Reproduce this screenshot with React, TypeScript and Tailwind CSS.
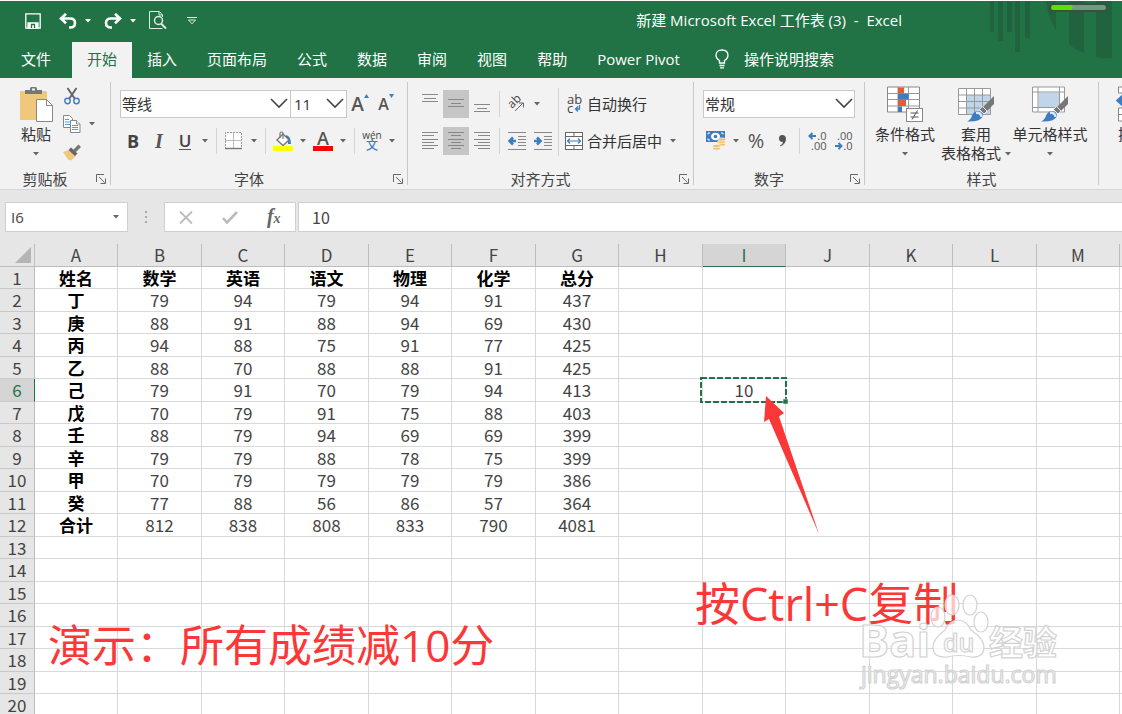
import React from "react";

const columns = ["A", "B", "C", "D", "E", "F", "G", "H", "I", "J", "K", "L", "M"];

const sheetRows: string[][] = [
  ["姓名", "数学", "英语", "语文", "物理", "化学", "总分"],
  ["丁", "79", "94", "79", "94", "91", "437"],
  ["庚", "88", "91", "88", "94", "69", "430"],
  ["丙", "94", "88", "75", "91", "77", "425"],
  ["乙", "88", "70", "88", "88", "91", "425"],
  ["己", "79", "91", "70", "79", "94", "413"],
  ["戊", "70", "79", "91", "75", "88", "403"],
  ["壬", "88", "79", "94", "69", "69", "399"],
  ["辛", "79", "79", "88", "78", "75", "399"],
  ["甲", "70", "79", "79", "79", "79", "386"],
  ["癸", "77", "88", "56", "86", "57", "364"],
  ["合计", "812", "838", "808", "833", "790", "4081"],
];

const rowNumbers = Array.from({ length: 20 }, (_, i) => i + 1);

const menuTabs = ["开始", "插入", "页面布局", "公式", "数据", "审阅", "视图", "帮助", "Power Pivot"];

type BtnProps = {
  label: string;
  active?: boolean;
  children: React.ReactNode;
};

const IconBtn: React.FC<BtnProps> = ({ label, active, children }) => (
  <button
    type="button"
    aria-label={label}
    className={`flex h-7 w-[26px] shrink-0 items-center justify-center ${active ? "bg-[#c6c6c6]" : ""}`}
  >
    {children}
  </button>
);

const Triangle: React.FC<{ className?: string }> = ({ className = "fill-[#666]" }) => (
  <svg width="6" height="4" viewBox="0 0 6 4" className={`shrink-0 ${className}`}>
    <path d="M0 0h6L3 3.6z" />
  </svg>
);

const Caret: React.FC<{ label: string }> = ({ label }) => (
  <button type="button" aria-label={label} className="flex h-7 w-[14px] shrink-0 items-center justify-center">
    <Triangle />
  </button>
);

const Sep: React.FC = () => <div className="mx-1 h-[26px] w-px shrink-0 bg-[#d4d4d4]" />;

const Chevron: React.FC = () => (
  <svg width="18" height="11" viewBox="0 0 18 11" className="pointer-events-none absolute top-2 right-[3px]">
    <path d="M1 1l8 8 8-8" fill="none" stroke="#444" strokeWidth="1.6" />
  </svg>
);

type GroupProps = {
  title: string;
  className: string;
  launcher?: boolean;
  children: React.ReactNode;
};

const Group: React.FC<GroupProps> = ({ title, className, launcher = true, children }) => (
  <>
    <section className={`flex shrink-0 flex-col ${className}`}>
      <div className="flex flex-1">{children}</div>
      <div className="flex h-5 items-center">
        <h2 className="flex-1 text-center text-[15px] leading-5 text-[#444]">{title}</h2>
        {launcher && (
          <button type="button" aria-label={`${title}设置`} className="flex w-5 items-center pl-1.5">
            <svg width="10" height="10" viewBox="0 0 10 10" fill="none" stroke="#666">
              <path d="M.5 8V.5H8M3 3l5.500 5.500M9.500 4.500v5h-5" />
            </svg>
          </button>
        )}
      </div>
    </section>
    <div className="mb-1 w-px shrink-0 bg-[#c8c8c8]" />
  </>
);

type BigBtnProps = {
  className: string;
  lines: string[];
  caretBelow?: boolean;
  children: React.ReactNode;
};

const BigBtn: React.FC<BigBtnProps> = ({ className, lines, caretBelow = true, children }) => (
  <button type="button" className={`flex shrink-0 flex-col items-center pt-1 text-[15px] leading-[19px] text-[#333] ${className}`}>
    <span className="mb-[2px] flex h-[37px]">{children}</span>
    {lines.map((line, i) => (
      <span key={line} className="flex items-center gap-1 whitespace-nowrap">
        {line}
        {!caretBelow && i === lines.length - 1 && <Triangle />}
      </span>
    ))}
    {caretBelow && (
      <span className="flex h-[19px] items-center">
        <Triangle />
      </span>
    )}
  </button>
);

// Horizontal rules given as [x1, x2, y]
const Lines: React.FC<{ rows: number[][] }> = ({ rows }) => (
  <svg width="18" height="20" viewBox="0 0 18 20" stroke="#888">
    {rows.map(([a, b, y]) => (
      <line key={y} x1={a} x2={b} y1={y + 0.5} y2={y + 0.5} />
    ))}
  </svg>
);

const PasteIcon = () => (
  <svg width="36" height="38" viewBox="0 0 36 38">
    <rect x="2" y="5" width="27" height="29" rx="1" fill="#efc87e" />
    <path d="M7 8V4h5V2.500Q12 1 13.500 1h4Q19 1 19 2.500V4h5v4z" fill="#777" />
    <rect x="14" y="2.500" width="3" height="2" fill="#f2f2f2" />
    <path d="M18.500 13.500h10l6 6v16h-16z" fill="#fff" stroke="#888" />
    <path d="M28.500 13.500v6h6" fill="none" stroke="#888" />
  </svg>
);

const ScissorsIcon = () => (
  <svg width="16" height="18" viewBox="0 0 16 18" fill="none">
    <path d="M3.500 1l7.500 11M12.500 1L5 12" stroke="#666" strokeWidth="2" />
    <circle cx="3.500" cy="14" r="2.700" stroke="#3d7cc0" strokeWidth="1.400" />
    <circle cx="12.500" cy="14" r="2.700" stroke="#3d7cc0" strokeWidth="1.400" />
  </svg>
);

const CopyIcon = () => (
  <svg width="18" height="18" viewBox="0 0 18 18" fill="#fff" stroke="#888">
    <path d="M.5.5h6l3 3v9h-9z" />
    <path d="M2 4.500h4M2 7h5M2 9.500h5" stroke="#5b9bd5" />
    <path d="M7.500 5.500h6l3.500 3.500v8.500h-9.500z" />
    <path d="M13.500 5.500v3.500H17" />
    <path d="M9 10.500h6M9 12.500h6M9 14.500h6" stroke="#5b9bd5" />
  </svg>
);

const BrushIcon = () => (
  <svg width="18" height="17" viewBox="0 0 18 17">
    <path d="M0 8l6-2 7 6-5 4.500-3-1z" fill="#efc87e" />
    <path d="M5.500 6l2.500-2.500 6.500 6-2.500 2.500z" fill="#666" />
    <path d="M10 6l5.500-5.500L18 3l-5.500 5.500z" fill="#777" />
  </svg>
);

const BucketIcon = () => (
  <svg width="20" height="20" viewBox="0 0 20 20">
    <path d="M13 4q5 1 5 9h-3q0-5-2-7z" fill="#3d7cc0" />
    <path d="M4 9l6-6 6 6-6 5.500z" fill="#fff" stroke="#777" strokeWidth="1.400" />
    <path d="M7 7V2.500Q7 1 8.500 1T10 2.500V8" fill="none" stroke="#777" strokeWidth="1.200" />
    <rect y="15" width="20" height="5" fill="#ff0" />
  </svg>
);

const BordersIcon = () => (
  <svg width="18" height="18" viewBox="0 0 18 18" fill="none" stroke="#999">
    <rect x=".5" y=".5" width="16" height="16" fill="#fff" stroke="none" />
    <path d="M.5 17V.5h16V17" strokeDasharray="2 1" />
    <path d="M8.500 1v16M0 8.500h17" stroke="#bbb" />
    <path d="M0 16.500h17" stroke="#777" strokeWidth="1.400" />
  </svg>
);

const IndentIcon: React.FC<{ right?: boolean }> = ({ right }) => (
  <svg width="18" height="18" viewBox="0 0 18 18" stroke="#888">
    <path d="M0 .5h18M10 4.500h8M10 7.500h8M10 10.500h8M10 13.500h8M0 17.500h18" />
    <path
      d={right ? "M0 9h6M3 5.500L6.500 9 3 12.500" : "M8 9H2M5 5.500L1.500 9 5 12.500"}
      fill="none"
      stroke="#3d7cc0"
      strokeWidth="2.600"
    />
  </svg>
);

const MergeIcon = () => (
  <svg width="18" height="18" viewBox="0 0 18 18" fill="#fff" stroke="#666">
    <rect x=".5" y=".5" width="17" height="17" />
    <path d="M.5 4.500h17M.5 13.500h17M9 .5v4M9 13.500v4" />
    <path d="M2.500 9h13M5 6.500L2.500 9 5 11.500M13 6.500L15.500 9 13 11.500" fill="none" stroke="#3d7cc0" strokeWidth="1.200" />
  </svg>
);

const MoneyIcon = () => (
  <svg width="20" height="20" viewBox="0 0 20 20">
    <rect width="19" height="11" fill="#3d7cc0" />
    <path d="M2 3.500V2h2M2 7.500V9h2M17 3.500V2h-2" stroke="#fff" fill="none" />
    <ellipse cx="9.500" cy="5.500" rx="4.500" ry="3.800" fill="#fff" />
    <circle cx="9.500" cy="5.500" r="1.800" fill="#3d7cc0" />
    <g fill="#efc07a" stroke="#fff" strokeWidth=".6">
      <ellipse cx="15.500" cy="13.500" rx="4" ry="1.700" />
      <ellipse cx="15.500" cy="11" rx="4" ry="1.700" />
      <ellipse cx="15.500" cy="8.500" rx="4" ry="1.700" />
      <ellipse cx="10.500" cy="17.500" rx="4" ry="1.700" />
      <ellipse cx="10.500" cy="15" rx="4" ry="1.700" />
    </g>
  </svg>
);

const DecimalIcon: React.FC<{ top: string; bottom: string; less?: boolean }> = ({ top, bottom, less }) => (
  <span className="relative flex w-[19px] flex-col items-end text-[11px] leading-[10px] text-[#555]">
    <svg width="10" height="20" viewBox="0 0 10 20" className="absolute top-0 left-0">
      <path
        d={less ? "M1 15h6M4.500 12l3 3-3 3" : "M8 5H2M4.500 2l-3 3 3 3"}
        fill="none"
        stroke="#3d7cc0"
        strokeWidth="2"
      />
    </svg>
    <span>{top}</span>
    <span>{bottom}</span>
  </span>
);

const ConditionalIcon = () => (
  <svg width="37" height="37" viewBox="0 0 37 37">
    <path d="M.5 1h32v25H.5z" fill="#fff" stroke="#888" />
    <path d="M.5 7.500h32M.5 13.500h32M.5 20h32M11 1v25M21.500 1v25" stroke="#999" />
    <path d="M11 1.500h6v6h-6zM11 14h8v6h-8z" fill="#dc5f3c" />
    <path d="M11 8h10.500v5.500H11zM11 20.500h4V26h-4z" fill="#3d7cc0" />
    <rect x="19.500" y="22.500" width="16" height="13" fill="#fff" stroke="#888" />
    <path d="M23.500 27h8M23.500 31h8M30.500 24.500l-5.500 9" stroke="#555" />
  </svg>
);

const PaintBrush = () => (
  <g>
    <path d="M36 10v8l-7 7-4-4z" fill="#777" />
    <path d="M24.500 20.500l4.500 4.500-3 3-4.500-4.500z" fill="#777" stroke="#fff" strokeWidth=".8" />
    <path d="M19 25q6 0 6 5-2 6-16 5.500 4-2 5-6 2-4 5-4.500z" fill="#3d7cc0" />
    <path d="M18 27q5-1 5.500 4" fill="none" stroke="#dce9f7" strokeWidth="2.500" />
  </g>
);

const TableStyleIcon = () => (
  <svg width="37" height="37" viewBox="0 0 37 37">
    <path d="M.5 2.500h32v26H.5z" fill="#fff" />
    <path d="M9 9h23.500v19.500H9z" fill="#c0d4ea" />
    <path d="M.5 2.500h32v26H.5zM.5 9h32M.5 15.500h32M.5 22h32M8.500 2.500v26M16.500 2.500v26M24.500 2.500v26" fill="none" stroke="#999" />
    <PaintBrush />
  </svg>
);

const CellStyleIcon = () => (
  <svg width="37" height="37" viewBox="0 0 37 37">
    <path d="M.5 1h32v25H.5z" fill="#fff" />
    <path d="M6.500 6.500h21v15h-21z" fill="#c0d4ea" />
    <path d="M.5 1h32v25H.5zM.5 6h32M.5 21.500h32M6 1v25M27.500 1v25" fill="none" stroke="#999" />
    <PaintBrush />
  </svg>
);

const TitleBar: React.FC = () => (
  <header className="relative border-t border-white bg-[#217346] text-white">
    <svg width="134" height="60" viewBox="0 0 134 60" className="absolute top-0 right-0">
      <g fill="#22633f">
        <path d="M2 0h4v31H2zM10 0h5v40h-5zM19 0h5v31h-5zM27 0h5v51h-5zM37 0h5v37h-5z" />
        <path d="M58 0h10v29Q60 16 58 0zM81 0h15v52q-9-3-15-9zM108 0h16v57q-9 1-16-1z" />
      </g>
      <rect x="62" y="3" width="57" height="7" rx="3.500" fill="#6f9c82" stroke="#35533f" strokeWidth="2" />
      <rect x="63.500" y="4" width="21" height="5" rx="2.500" fill="#5fe000" />
    </svg>

    <div className="relative flex h-[41px] items-center pb-0.5 pl-[25px]">
      <button type="button" aria-label="保存">
        <svg width="16" height="16" viewBox="0 0 16 16" fill="none" stroke="#fff" strokeWidth="1.300">
          <path d="M.8.8h14.400v14.400H.8z" />
          <path d="M3 10h10v5H3z" fill="#fff" />
          <path d="M6.500 15v-3.500h3V15" stroke="#217346" />
        </svg>
      </button>
      <button type="button" aria-label="撤消" className="ml-[18px]">
        <svg width="18" height="16" viewBox="0 0 18 16" fill="none" stroke="#fff" strokeWidth="2.600">
          <path d="M7 .8L2 5.500l5 4.700M2 5.500h9q5 0 5 4.500T11 14.500h-1" />
        </svg>
      </button>
      <button type="button" aria-label="撤消列表" className="ml-2">
        <Triangle className="fill-white" />
      </button>
      <button type="button" aria-label="恢复" className="ml-[13px]">
        <svg width="18" height="16" viewBox="0 0 18 16" fill="none" stroke="#fff" strokeWidth="2.600">
          <path d="M11 .8l5 4.700-5 4.700M16 5.500H7Q2 5.500 2 10t5 4.500h1" />
        </svg>
      </button>
      <button type="button" aria-label="恢复列表" className="ml-2">
        <Triangle className="fill-white" />
      </button>
      <button type="button" aria-label="打印预览" className="ml-[13px]">
        <svg width="18" height="19" viewBox="0 0 18 19" fill="none" stroke="#dfece4">
          <path d="M13.500 6V4l-3-3.500H.5v17h13" />
          <path d="M10 .5V4h3.500" />
          <circle cx="9.500" cy="9.500" r="4" strokeWidth="1.500" />
          <path d="M12 12.500l5 5" strokeWidth="2" />
        </svg>
      </button>
      <button type="button" aria-label="自定义快速访问工具栏" className="ml-5">
        <svg width="10" height="8" viewBox="0 0 10 8" fill="none" stroke="#dfece4">
          <path d="M0 .5h10M1.500 3h7L5 6.800z" />
        </svg>
      </button>
      <h1 className="mr-[220px] ml-auto text-[15px] whitespace-pre">新建 Microsoft Excel 工作表 (3)  -  Excel</h1>
    </div>

    <nav className="relative flex h-9 text-[15px] whitespace-nowrap">
      <button type="button" className="mr-1.5 ml-1.5 px-[15px] pb-0.5">
        文件
      </button>
      {menuTabs.map((tab, i) => (
        <button type="button" key={tab} className={`px-[15px] pb-0.5 ${i === 0 ? "bg-[#f2f2f2] text-[#217346]" : ""}`}>
          {tab}
        </button>
      ))}
      <button type="button" className="ml-5 flex items-center gap-[15px] pb-0.5">
        <svg width="14" height="20" viewBox="0 0 14 20" fill="none" stroke="#fff" strokeWidth="1.300">
          <path d="M4.500 14v-2.500Q1 9.500 1 6.500 1 1 7 1t6 5.500q0 3-3.500 5V14z" />
          <path d="M4.500 16.500h5M5 18.800h4" />
        </svg>
        操作说明搜索
      </button>
    </nav>
  </header>
);

const Ribbon: React.FC = () => (
  <div className="flex h-28 overflow-hidden border-b border-[#d5d5d5] bg-[#f2f2f2] pt-1 text-[#333]">
    <Group title="剪贴板" className="w-[110px]">
      <BigBtn className="ml-[15px] w-[42px]" lines={["粘贴"]}>
        <PasteIcon />
      </BigBtn>
      <div className="ml-[2px] flex flex-col">
        <IconBtn label="剪切">
          <ScissorsIcon />
        </IconBtn>
        <div className="flex">
          <IconBtn label="复制">
            <CopyIcon />
          </IconBtn>
          <Caret label="复制选项" />
        </div>
        <IconBtn label="格式刷">
          <BrushIcon />
        </IconBtn>
      </div>
    </Group>

    <Group title="字体" className="w-[296px]">
      <div className="flex flex-col gap-[9px] pt-2 pl-[9px]">
        <div className="flex">
          <div className="relative">
            <select aria-label="字体名称" className="h-7 w-[171px] appearance-none border border-[#c8c8c8] bg-white px-px text-[15px]">
              <option>等线</option>
            </select>
            <Chevron />
          </div>
          <div className="relative -ml-px">
            <select aria-label="字号" className="h-7 w-[57px] appearance-none border border-[#c8c8c8] bg-white px-[3px] text-[15px]">
              <option>11</option>
            </select>
            <Chevron />
          </div>
          <IconBtn label="增大字号">
            <span className="text-[19px] font-semibold text-[#555]">A</span>
            <svg width="5" height="4" viewBox="0 0 5 4" className="mb-4 fill-[#3d7cc0]">
              <path d="M0 4h5L2.500 0z" />
            </svg>
          </IconBtn>
          <IconBtn label="减小字号">
            <span className="text-base font-semibold text-[#555]">A</span>
            <svg width="5" height="4" viewBox="0 0 5 4" className="mb-4 fill-[#3d7cc0]">
              <path d="M0 0h5L2.500 4z" />
            </svg>
          </IconBtn>
        </div>
        <div className="flex items-center">
          <IconBtn label="加粗">
            <span className="text-lg font-bold text-[#444]">B</span>
          </IconBtn>
          <IconBtn label="倾斜">
            <span className="font-['Liberation_Serif',serif] text-xl font-bold text-[#555] italic">I</span>
          </IconBtn>
          <IconBtn label="下划线">
            <span className="border-b border-[#555] text-[17px] leading-[17px] font-semibold text-[#444]">U</span>
          </IconBtn>
          <Caret label="下划线选项" />
          <Sep />
          <IconBtn label="边框">
            <BordersIcon />
          </IconBtn>
          <Caret label="边框选项" />
          <Sep />
          <IconBtn label="填充颜色">
            <BucketIcon />
          </IconBtn>
          <Caret label="填充颜色选项" />
          <IconBtn label="字体颜色">
            <span className="w-5 border-b-[5px] border-[#f00] text-lg leading-[15px] font-semibold text-[#555]">A</span>
          </IconBtn>
          <Caret label="字体颜色选项" />
          <Sep />
          <IconBtn label="拼音指南">
            <span className="flex flex-col items-center text-[10px] leading-[9px] font-medium text-[#444]">
              wén
              <span className="text-xs leading-[11px] text-[#3d7cc0]">文</span>
            </span>
          </IconBtn>
          <Caret label="拼音选项" />
        </div>
      </div>
    </Group>

    <Group title="对齐方式" className="w-[285px]">
      <div className="flex flex-col gap-[9px] pt-2 pl-[9px]">
        <div className="flex items-center">
          <IconBtn label="顶端对齐">
            <Lines rows={[[1, 17, 0], [3, 15, 4], [1, 17, 7]]} />
          </IconBtn>
          <IconBtn label="垂直居中" active>
            <Lines rows={[[1, 17, 5], [4, 14, 9], [1, 17, 12]]} />
          </IconBtn>
          <IconBtn label="底端对齐">
            <Lines rows={[[1, 17, 10], [4, 14, 14], [1, 17, 17]]} />
          </IconBtn>
          <Sep />
          <IconBtn label="方向">
            <svg width="20" height="20" viewBox="0 0 20 20" className="overflow-visible">
              <text x="0" y="0" fontSize="12" fill="#444" transform="translate(5 15) rotate(-45)">
                ab
              </text>
              <path d="M8 17l8-8M12 9h4.500v4.500" fill="none" stroke="#666" />
            </svg>
          </IconBtn>
          <Caret label="方向选项" />
        </div>
        <div className="flex items-center">
          <IconBtn label="左对齐">
            <Lines rows={[[1, 17, 1], [1, 13, 4], [1, 17, 8], [1, 13, 11], [1, 17, 14], [1, 13, 17]]} />
          </IconBtn>
          <IconBtn label="居中" active>
            <Lines rows={[[1, 17, 1], [4, 14, 4], [1, 17, 8], [4, 14, 11], [1, 17, 14], [4, 14, 17]]} />
          </IconBtn>
          <IconBtn label="右对齐">
            <Lines rows={[[1, 17, 1], [5, 17, 4], [1, 17, 8], [5, 17, 11], [1, 17, 14], [5, 17, 17]]} />
          </IconBtn>
          <Sep />
          <IconBtn label="减少缩进量">
            <IndentIcon />
          </IconBtn>
          <IconBtn label="增加缩进量">
            <IndentIcon right />
          </IconBtn>
        </div>
      </div>
      <div className="mx-[2px] mt-1.5 h-[68px] w-px bg-[#d4d4d4]" />
      <div className="flex flex-col gap-[9px] pt-2">
        <button type="button" className="flex h-7 items-center text-[15px] whitespace-nowrap">
          <span className="relative flex w-[26px] flex-col pl-1.5 text-left text-[13px] leading-[9px] text-[#444]">
            <span>ab</span>
            <span>c</span>
            <svg width="7" height="8" viewBox="0 0 7 8" className="absolute right-[6px] bottom-0">
              <path d="M5.500 0v4H1.500M4 1.500L1.500 4 4 6.500" fill="none" stroke="#3d7cc0" strokeWidth="1.300" />
            </svg>
          </span>
          自动换行
        </button>
        <div className="flex">
          <button type="button" className="flex h-7 items-center text-[15px] whitespace-nowrap">
            <span className="flex w-[26px] justify-center">
              <MergeIcon />
            </span>
            合并后居中
          </button>
          <span className="ml-1 flex">
            <Caret label="合并选项" />
          </span>
        </div>
      </div>
    </Group>

    <Group title="数字" className="w-[170px]">
      <div className="flex flex-col gap-[9px] pt-2 pl-[9px]">
        <div className="relative">
          <select aria-label="数字格式" className="h-7 w-[152px] appearance-none border border-[#c8c8c8] bg-white px-px text-[15px]">
            <option>常规</option>
          </select>
          <Chevron />
        </div>
        <div className="flex items-center">
          <IconBtn label="会计数字格式">
            <MoneyIcon />
          </IconBtn>
          <Caret label="会计数字格式选项" />
          <IconBtn label="百分比样式">
            <span className="text-xl text-[#555]">%</span>
          </IconBtn>
          <IconBtn label="千位分隔样式">
            <svg width="9" height="12" viewBox="0 0 9 12" fill="#555">
              <path d="M4 0q4 0 4 4 0 5-5.500 7.500L2 10.500Q5 9 5 7 1 7 1 3.500 1 0 4 0z" />
            </svg>
          </IconBtn>
          <Sep />
          <IconBtn label="增加小数位数">
            <DecimalIcon top=".0" bottom=".00" />
          </IconBtn>
          <IconBtn label="减少小数位数">
            <DecimalIcon top=".00" bottom=".0" less />
          </IconBtn>
        </div>
      </div>
    </Group>

    <Group title="样式" className="w-[233px]" launcher={false}>
      <BigBtn className="ml-[5px] w-[70px]" lines={["条件格式"]}>
        <ConditionalIcon />
      </BigBtn>
      <BigBtn className="w-[72px]" lines={["套用", "表格格式"]} caretBelow={false}>
        <TableStyleIcon />
      </BigBtn>
      <BigBtn className="w-[76px]" lines={["单元格样式"]}>
        <CellStyleIcon />
      </BigBtn>
    </Group>

    <Group title="单元格" className="w-[200px]" launcher={false}>
      <BigBtn className="ml-[15px] w-[38px]" lines={["插入"]}>
        <svg width="34" height="37" viewBox="0 0 34 37" fill="#fff" stroke="#888">
          <path d="M2.500 1h29v6h-29zM2.500 22h29v13h-29zM2.500 28.500h29M12 1v6M22 1v6M12 22v13M22 22v13" />
          <path d="M20 14.500H3M9 8l-7 6.500L9 21" fill="none" stroke="#3d7cc0" strokeWidth="3" />
        </svg>
      </BigBtn>
    </Group>
  </div>
);

const FormulaBar: React.FC = () => (
  <div className="flex bg-[#e6e6e6] py-3 pl-[5px] text-[15px] text-[#444]">
    <div className="flex h-[30px] w-[123px] shrink-0 items-center border border-[#cfcfcf] bg-white pr-2">
      <input aria-label="名称框" defaultValue="I6" className="min-w-0 flex-1 bg-transparent pl-[5px] outline-none" />
      <button type="button" aria-label="名称列表">
        <Triangle />
      </button>
    </div>
    <div className="flex w-9 shrink-0 flex-col items-center justify-center gap-[3px]">
      <i className="size-[2px] bg-[#aaa]" />
      <i className="size-[2px] bg-[#aaa]" />
      <i className="size-[2px] bg-[#aaa]" />
    </div>
    <div className="flex h-[30px] w-[132px] shrink-0 items-center justify-around border border-[#cfcfcf] bg-white">
      <button type="button" aria-label="取消">
        <svg width="14" height="13" viewBox="0 0 14 13" fill="none" stroke="#bbb" strokeWidth="1.800">
          <path d="M1 .5l12 12M13 .5L1 12.500" />
        </svg>
      </button>
      <button type="button" aria-label="输入">
        <svg width="16" height="13" viewBox="0 0 16 13" fill="none" stroke="#bbb" strokeWidth="2.600">
          <path d="M1 7l4 4.500L15 1" />
        </svg>
      </button>
      <button type="button" aria-label="插入函数" className="font-['Liberation_Serif',serif] text-xl leading-5 font-semibold text-[#666] italic">
        f<span className="text-sm">x</span>
      </button>
    </div>
    <input
      aria-label="编辑栏"
      defaultValue="10"
      className="ml-[2px] h-[30px] min-w-0 flex-1 border border-r-0 border-[#cfcfcf] bg-white pl-[13px] font-['Noto_Sans_CJK_SC',sans-serif] text-base outline-none"
    />
  </div>
);

const Cell: React.FC<{ row: number; col: string; value?: string }> = ({ row, col, value }) => {
  const selected = row === 6 && col === "I";
  const bold = row === 1 || col === "A";
  return (
    <td
      className={`border-r border-b border-[#d9d9d9] p-0 text-center ${bold ? "font-bold text-black" : ""} ${
        selected ? "relative" : ""
      }`}
    >
      {selected ? "10" : value}
      {selected && (
        <svg className="absolute -top-[2px] -left-[3px] size-[calc(100%+4px)] overflow-visible">
          <rect x="1" y="1" width="85" height="24" fill="none" stroke="#217346" strokeWidth="2" strokeDasharray="6 2" />
          <rect x="83" y="22" width="5" height="5" fill="#217346" stroke="#fff" strokeWidth=".5" />
        </svg>
      )}
    </td>
  );
};

const Sheet: React.FC = () => (
  <main className="relative flex-1 overflow-hidden bg-white">
    <table className="w-full table-fixed border-separate border-spacing-0 font-['Noto_Sans_CJK_SC',sans-serif] text-[17px] leading-5 text-[#444]">
      <colgroup>
        <col className="w-[35px]" />
        {columns.map((c, i) => (
          <col key={c} className={i % 2 ? "w-[84px]" : "w-[83px]"} />
        ))}
        <col />
      </colgroup>
      <thead>
        <tr className="h-[23px] bg-[#e6e6e6]">
          <td className="border-r border-b border-[#bdbdbd] p-0">
            <svg width="17" height="17" viewBox="0 0 17 17" className="ml-[14px] fill-[#b5b5b5]">
              <path d="M17 0v16H1z" />
            </svg>
          </td>
          {columns.map((c) => (
            <th
              key={c}
              scope="col"
              className={`border-r border-b p-0 font-normal ${
                c === "I" ? "border-r-[#bdbdbd] border-b-[#217346] bg-[#d5d5d5] text-[#217346]" : "border-[#bdbdbd]"
              }`}
            >
              {c}
            </th>
          ))}
          <td className="border-b border-[#bdbdbd]" />
        </tr>
      </thead>
      <tbody>
        {rowNumbers.map((n) => (
          <tr key={n} className={n % 2 ? "h-[22px]" : "h-[23px]"}>
            <th
              scope="row"
              className={`border-r border-b border-b-[#c9c9c9] p-0 font-normal ${
                n === 6 ? "border-r-[#217346] bg-[#d5d5d5] text-[#217346]" : "border-r-[#bdbdbd] bg-[#e6e6e6]"
              }`}
            >
              {n}
            </th>
            {columns.map((c, i) => (
              <Cell key={c} row={n} col={c} value={sheetRows[n - 1]?.[i]} />
            ))}
            <td className="border-b border-[#d9d9d9] p-0" />
          </tr>
        ))}
      </tbody>
    </table>

    <svg width="60" height="142" viewBox="0 0 60 142" className="absolute top-[151px] left-[762px]">
      <path d="M4 1l18 17-5 3.500L57 139 7 24l-5 3z" fill="#fb3838" />
    </svg>
    <p className="absolute top-[379px] left-[48px] text-[44px] leading-[44px] whitespace-nowrap text-[#fb3838]">
      演示：所有成绩减10分
    </p>
    <p className="absolute top-[338px] left-[695px] text-[45px] leading-[44px] whitespace-nowrap text-[#fb3838]">
      按Ctrl+C复制
    </p>

    <svg width="230" height="104" viewBox="0 0 230 104" className="absolute top-[346px] left-[856px]">
      <g fill="#fff" fillOpacity=".7" stroke="#d2d2d2" strokeWidth="1.200">
        <text x="3" y="67" fontSize="45" fontWeight="700">
          Bai
        </text>
        <path d="M102 30q8 0 13 10 13 9 13 17 0 11-13 10-12-3-24 0-14 1-14-10 0-8 12-17 5-10 13-10z" />
        <ellipse cx="82" cy="27" rx="7" ry="10" />
        <ellipse cx="96" cy="15" rx="7" ry="10" />
        <ellipse cx="114" cy="15" rx="7" ry="10" />
        <ellipse cx="125" cy="32" rx="7" ry="10" />
        <text x="87" y="62" fontSize="25" fontWeight="600">
          du
        </text>
        <text x="133" y="65" fontSize="34" fontWeight="700">
          经验
        </text>
        <text x="5" y="93" fontSize="23" fontWeight="500">
          jingyan.baidu.com
        </text>
      </g>
    </svg>
  </main>
);

const App: React.FC = () => {
  return (
    <div className="flex h-screen flex-col overflow-hidden font-['Open_Sans','Noto_Sans_CJK_SC',sans-serif]">
      <TitleBar />
      <Ribbon />
      <FormulaBar />
      <Sheet />
    </div>
  );
};

export default App;
